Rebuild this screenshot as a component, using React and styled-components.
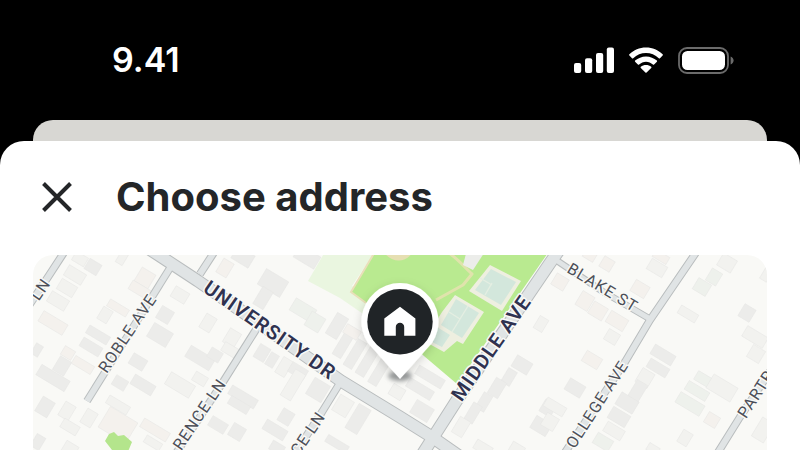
import React from "react";
import styled, { createGlobalStyle } from "styled-components";

const ROADS = [
  { d: "M72 240 L63 254 L48 277 L26 310", width: 8 },
  { d: "M222 240 L213 254 L200 274", width: 8 },
  { d: "M170 268 L87 401", width: 8 },
  { d: "M257 328 L223 382 L165 470", width: 8 },
  { d: "M343 378 L322 412 L288 464", width: 8 },
  { d: "M556 260 L602 291 L650 319", width: 7 },
  { d: "M704 240 L695 254 L650 320 L625 362 L556 466", width: 8 },
  { d: "M775 364 L740 417 L712 462", width: 8 },
  { d: "M140 243 L160 256 L198 281 L270 331 L341 381 L400 417 L432 437 L462 458", width: 13 },
  { d: "M562 246 L550 263 L457 400 L434 436 L420 458", width: 13 },
];

const STREETS = [
  { text: "LN", x: 40, y: 289, angle: -56 },
  { text: "ROBLE AVE", x: 127, y: 333, angle: -56 },
  { text: "RENCE LN", x: 222, y: 380, angle: -56, anchor: "end" },
  { text: "CE LN", x: 321, y: 413, angle: -56, anchor: "end" },
  { text: "BLAKE ST", x: 603, y: 287, angle: 31 },
  { text: "OLLEGE AVE", x: 624, y: 362, angle: -57, anchor: "end" },
  { text: "PARTR", x: 741, y: 416, angle: -57, anchor: "start" },
  { text: "UNIVERSITY DR", x: 270, y: 330, angle: 35, major: true },
  { text: "MIDDLE AVE", x: 491, y: 348, angle: -55, major: true },
];

// center x, center y, width, depth, tone
const HOUSES = [
  [93, 267, 14, 12, 1], [80, 259, 14, 10, 0], [75, 275, 20, 12, 0],
  [67, 288, 18, 12, 0], [58, 301, 20, 12, 0], [122, 258, 8, 13, 0],
  [53, 323, 28, 12, 2], [37, 350, 8, 12, 1], [62, 366, 13, 16, 1],
  [53, 378, 33, 12, 1], [45, 407, 14, 17, 1], [67, 411, 12, 16, 0],
  [70, 427, 18, 10, 0], [89, 418, 12, 16, 0], [98, 335, 24, 9, 1],
  [91, 347, 22, 10, 1], [105, 315, 11, 14, 0], [118, 308, 22, 8, 2],
  [145, 278, 16, 16, 2], [140, 290, 22, 10, 2], [180, 295, 16, 12, 0],
  [165, 315, 14, 14, 1], [160, 335, 22, 16, 1], [138, 362, 16, 12, 1],
  [120, 383, 14, 11, 1], [143, 385, 24, 11, 1], [118, 405, 24, 9, 0],
  [180, 385, 28, 14, 0], [200, 379, 14, 10, 0], [200, 358, 28, 13, 1],
  [215, 355, 13, 11, 1], [208, 323, 12, 16, 0], [155, 430, 30, 10, 2],
  [118, 425, 32, 24, 2], [153, 443, 18, 8, 0], [218, 425, 18, 11, 1],
  [38, 442, 10, 14, 1], [70, 449, 14, 12, 0], [83, 365, 22, 9, 2],
  [68, 353, 12, 10, 2], [225, 268, 12, 16, 2], [243, 257, 20, 14, 1],
  [273, 283, 26, 18, 1], [263, 298, 12, 20, 1], [307, 257, 24, 14, 1],
  [303, 310, 24, 14, 3], [315, 322, 16, 16, 3], [337, 326, 13, 24, 1],
  [343, 345, 10, 26, 1], [355, 354, 10, 30, 1], [367, 362, 10, 30, 1],
  [379, 372, 10, 28, 1], [352, 332, 16, 10, 2], [232, 338, 13, 16, 0],
  [230, 350, 16, 10, 0], [243, 397, 30, 10, 1], [239, 405, 22, 9, 1],
  [262, 353, 12, 15, 1], [272, 360, 9, 14, 1], [284, 367, 11, 18, 0],
  [298, 371, 18, 11, 1], [293, 385, 12, 30, 0], [318, 390, 18, 19, 1],
  [286, 417, 13, 14, 1], [275, 430, 24, 11, 1], [237, 432, 14, 14, 1],
  [343, 406, 16, 18, 0], [358, 419, 14, 28, 1], [337, 444, 24, 8, 1],
  [277, 448, 14, 10, 1], [422, 411, 20, 15, 1], [430, 377, 30, 10, 1],
  [420, 389, 28, 10, 1], [397, 392, 14, 12, 0], [541, 324, 10, 14, 0],
  [522, 365, 18, 13, 1], [509, 377, 10, 16, 1], [497, 388, 12, 18, 1],
  [484, 402, 10, 18, 1], [473, 413, 10, 20, 1], [461, 427, 12, 18, 0],
  [548, 408, 13, 14, 1], [541, 426, 18, 14, 1], [517, 449, 14, 10, 0],
  [483, 448, 18, 10, 0], [590, 255, 12, 10, 2], [607, 264, 12, 12, 2],
  [560, 282, 14, 13, 2], [585, 301, 14, 16, 2],
  [598, 311, 16, 14, 2], [617, 321, 20, 13, 2], [612, 337, 13, 12, 0],
  [592, 360, 18, 12, 2], [575, 388, 18, 13, 1], [555, 407, 22, 10, 0],
  [550, 422, 14, 14, 0], [640, 289, 16, 13, 2], [657, 268, 18, 12, 0],
  [661, 257, 16, 8, 2], [727, 263, 16, 14, 0], [714, 277, 12, 14, 3],
  [702, 287, 15, 13, 3], [688, 314, 20, 9, 0], [747, 313, 13, 14, 1],
  [755, 337, 24, 12, 0], [756, 354, 14, 14, 0], [766, 275, 8, 12, 0],
  [663, 355, 24, 11, 1], [658, 368, 22, 10, 1], [645, 378, 14, 16, 0],
  [637, 392, 12, 22, 1], [627, 403, 20, 14, 1], [619, 417, 20, 13, 1],
  [614, 431, 20, 11, 0], [603, 442, 18, 12, 3], [703, 379, 16, 10, 3],
  [697, 391, 24, 10, 3], [690, 404, 28, 12, 3], [722, 388, 28, 16, 0],
  [712, 420, 13, 12, 2], [685, 438, 11, 14, 0], [763, 430, 14, 22, 0],
  [653, 449, 12, 8, 0],
];

const TONES = ["#f2f2ef", "#ececea", "#f4f1ed", "#eef1ec"];

function SignalIcon() {
  return (
    <svg width="40" height="26" viewBox="0 0 40 26" fill="#fff" aria-hidden="true">
      <rect x="0" y="16" width="7.2" height="10" rx="2" />
      <rect x="11" y="11.3" width="7.2" height="14.7" rx="2" />
      <rect x="22" y="6" width="7.2" height="20" rx="2" />
      <rect x="32.8" y="0.5" width="7.2" height="25.5" rx="2" />
    </svg>
  );
}

function WifiIcon() {
  return (
    <svg width="34" height="26" viewBox="0 0 34 26" fill="#fff" aria-hidden="true">
      <path d="M17 0.6 C23.6 0.6 29.2 3.2 33.6 7.3 Q34.2 8 33.6 8.6 L31 11.3 Q30.4 11.8 29.8 11.3 C26.2 8 21.8 6.1 17 6.1 C12.2 6.1 7.8 8 4.2 11.3 Q3.6 11.8 3 11.3 L0.4 8.6 Q-0.2 8 0.4 7.3 C4.8 3.2 10.4 0.6 17 0.6 Z" />
      <path d="M17 9.4 C21.2 9.4 25 11 27.9 13.6 Q28.4 14.2 27.9 14.8 L25.1 17.6 Q24.5 18 23.9 17.6 C22 15.9 19.6 14.8 17 14.8 C14.4 14.8 12 15.9 10.1 17.6 Q9.5 18 8.9 17.6 L6.1 14.8 Q5.6 14.2 6.1 13.6 C9 11 12.8 9.4 17 9.4 Z" />
      <path d="M17 18.1 C19 18.1 20.8 18.7 22.2 19.8 Q22.7 20.4 22.2 21 L17.6 25.6 Q17 26.1 16.4 25.6 L11.8 21 Q11.3 20.4 11.8 19.8 C13.2 18.7 15 18.1 17 18.1 Z" />
    </svg>
  );
}

function BatteryIcon() {
  return (
    <svg width="56" height="27" viewBox="0 0 56 27" aria-hidden="true">
      <rect x="1" y="1" width="49" height="25" rx="8" fill="none" stroke="#6b6b6b" strokeWidth="1.8" />
      <rect x="4" y="4" width="43" height="19" rx="5.5" fill="#fff" />
      <path d="M52.6 9.5 C56.6 11.5 56.6 15.5 52.6 17.5 Z" fill="#6b6b6b" />
    </svg>
  );
}

function CloseIcon() {
  return (
    <svg width="30" height="30" viewBox="0 0 30 30" aria-hidden="true">
      <path d="M1.5 1.5 L28.5 28.5 M28.5 1.5 L1.5 28.5" stroke="#242628" strokeWidth="4" />
    </svg>
  );
}

function Park() {
  return (
    <g>
      <path d="M326 250 L308 281 L340 298 L372 320 L386 300 L352 286 L376 250 Z" fill="#eaf6e0" />
      <path d="M376 250 L351 292 L368 304 L424 356 L457 384 L550 250 Z" fill="#b9ea90" />
      <path d="M376 250 L351 292 L366 303" fill="none" stroke="#e9dfb9" strokeWidth="2" />
      <path d="M383 250 C388 262 406 266 414 250 Z" fill="#e6dfb2" />
      <path d="M444 250 C456 256 464 267 472 274 L463 285 L436 300" fill="none" stroke="#e0e3ac" strokeWidth="3" strokeLinejoin="round" />
      <path d="M467 250 L486 250 L473 270 L463 265 Z" fill="#ecedea" />
      <path d="M490 265 L521 281 L502 311 L469 291 Z" fill="#eeefe0" />
      <path d="M491 269 L516 282 L501 305 L475 290 Z" fill="#d3e7dc" />
      <path d="M480 278 L492 285 M492 283 L485 295" stroke="#e4eee2" strokeWidth="1.4" />
      <path d="M455 295 L484 312 L463 344 L457 341 L444 352 L424 341 L442 312 Z" fill="#eeefe0" />
      <path d="M456 299 L479 313 L462 338 L441 325 Z" fill="#d3e7dc" />
      <path d="M468 306 L452 332 M449 312 L460 319" stroke="#e4eee2" strokeWidth="1.4" />
      <path d="M437 327 L450 335 L442 347 L428 340 Z" fill="#d3e7dc" />
      <path d="M105 441 L109 434 L114 432 L118 436 L124 435 L132 442 L127 454 L112 450 Z" fill="#b4e58c" />
    </g>
  );
}

function HomePin() {
  return (
    <g>
      <ellipse cx="400" cy="376" rx="12" ry="5" fill="#a3a5a6" filter="url(#pinBlur)" />
      <path
        d="M400 379 L368 343 A38.5 38.5 0 1 1 432 343 Z"
        fill="#fff"
        filter="url(#pinShadow)"
      />
      <circle cx="400" cy="321.7" r="32.7" fill="#202427" />
      <path
        d="M384.3 335.8 V318.4 L400 306.7 L415.4 318.4 V335.8 H404.2 V327 A4.2 4.2 0 0 0 395.8 327 V335.8 Z"
        fill="#fff"
      />
    </g>
  );
}

function AddressMap() {
  return (
    <MapCanvas viewBox="33 255 734 195" role="img" aria-label="Map">
      <defs>
        <filter id="pinBlur" x="-50%" y="-50%" width="200%" height="200%">
          <feGaussianBlur stdDeviation="2" />
        </filter>
        <filter id="pinShadow" x="-30%" y="-30%" width="160%" height="160%">
          <feDropShadow dx="0" dy="3" stdDeviation="5" floodColor="#000" floodOpacity="0.16" />
        </filter>
      </defs>
      <rect x="33" y="255" width="734" height="195" fill="#f9f9f6" />
      {HOUSES.map(([x, y, w, h, tone], i) => (
        <rect
          key={i}
          x={-w / 2}
          y={-h / 2}
          width={w}
          height={h}
          fill={TONES[tone]}
          stroke="#e6e6e4"
          strokeWidth="0.5"
          transform={`translate(${x} ${y}) rotate(31)`}
        />
      ))}
      <Park />
      {ROADS.map((road) => (
        <RoadLine key={road.d} d={road.d} stroke="#b9bdbe" strokeWidth={road.width} />
      ))}
      {ROADS.map((road) => (
        <RoadLine key={road.d} d={road.d} stroke="#e0e4e5" strokeWidth={road.width - 2} />
      ))}
      {STREETS.map((street) => (
        <StreetName
          key={street.text}
          $major={street.major}
          textAnchor={street.anchor || "middle"}
          transform={`translate(${street.x} ${street.y}) rotate(${street.angle})`}
          dy={street.major ? 7 : 6}
        >
          {street.text}
        </StreetName>
      ))}
      <HomePin />
    </MapCanvas>
  );
}

function App() {
  return (
    <Screen>
      <GlobalStyle />
      <StatusBar>
        <Clock>9.41</Clock>
        <StatusIcons>
          <SignalIcon />
          <WifiIcon />
          <BatteryIcon />
        </StatusIcons>
      </StatusBar>
      <BackSheet />
      <Sheet>
        <SheetHeader>
          <CloseButton type="button" aria-label="Close">
            <CloseIcon />
          </CloseButton>
          <Title>Choose address</Title>
        </SheetHeader>
        <MapCard>
          <AddressMap />
        </MapCard>
      </Sheet>
    </Screen>
  );
}

export default App;

const GlobalStyle = createGlobalStyle`
  * {
    box-sizing: border-box;
  }

  body {
    margin: 0;
    background-color: #000;
    font-family: Inter, "Liberation Sans", sans-serif;
  }
`;

const Screen = styled.div`
  display: flex;
  flex-direction: column;
  min-height: 100vh;
  background-color: #000;
`;

const StatusBar = styled.div`
  display: flex;
  align-items: center;
  justify-content: space-between;
  height: 120px;
  padding: 0 66px 0 112px;
`;

const Clock = styled.time`
  color: #fff;
  font-size: 34px;
  font-weight: 600;
  line-height: 40px;
`;

const StatusIcons = styled.div`
  display: flex;
  align-items: center;
  gap: 15px;
`;

const BackSheet = styled.div`
  height: 21px;
  margin: 0 33px;
  background-color: #d8d7d3;
  border-radius: 20px 20px 0 0;
`;

const Sheet = styled.main`
  flex: 1;
  background-color: #fff;
  border-radius: 24px 24px 0 0;
`;

const SheetHeader = styled.header`
  display: flex;
  align-items: center;
  gap: 44px;
  height: 114px;
  padding: 0 42px 2px;
`;

const CloseButton = styled.button`
  display: flex;
  padding: 0;
  border: none;
  background: none;
  cursor: pointer;
`;

const Title = styled.h1`
  margin: 0;
  color: #242628;
  font-size: 40px;
  font-weight: 700;
  line-height: 50px;
`;

const MapCard = styled.section`
  margin: 0 33px;
  overflow: hidden;
  border-radius: 20px 20px 0 0;
`;

const MapCanvas = styled.svg`
  display: block;
  width: 100%;
`;

const RoadLine = styled.path`
  fill: none;
  stroke-linejoin: round;
`;

const StreetName = styled.text`
  fill: ${(props) => (props.$major ? "#2f3250" : "#4c4f58")};
  font-family: Roboto, sans-serif;
  font-size: ${(props) => (props.$major ? "20px" : "16px")};
  font-weight: ${(props) => (props.$major ? 600 : 400)};
  letter-spacing: 1px;
  paint-order: stroke;
  stroke: #f9f9f6;
  stroke-width: 3px;
  stroke-linejoin: round;
`;
